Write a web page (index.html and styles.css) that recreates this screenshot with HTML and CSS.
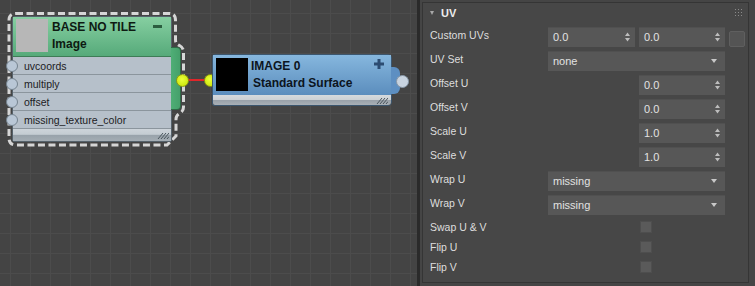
FILE: index.html
```html
<!DOCTYPE html>
<html>
<head>
<meta charset="utf-8">
<link rel="stylesheet" href="styles.css">
</head>
<body>
<div class="app">
  <div class="canvas">
    <svg class="sel" width="200" height="160" viewBox="0 0 200 160">
      <path d="M16 13.5 L169 13.5 Q175.5 13.5 175.5 20 L175.5 40 Q175.5 44 179.5 45.5 Q183.5 47.5 183.5 52 L183.5 107 Q183.5 111.5 179.5 113.5 Q176 115.5 176 119 L176 136 L167 145 L16 145 Q9 145 9 138 L9 20 Q9 13.5 16 13.5 Z" fill="none" stroke="#d6d6d6" stroke-width="3" stroke-dasharray="7 3.5"/>
    </svg>
    <div class="node n1">
      <div class="n1-tab"></div>
      <div class="n1-head">
        <div class="thumb thumb-gray"></div>
        <div class="titles">
          <div>BASE NO TILE</div>
          <div>Image</div>
        </div>
        <div class="minus"></div>
      </div>
      <div class="rows">
        <div class="row"><span class="in-sock"></span>uvcoords</div>
        <div class="row"><span class="in-sock"></span>multiply</div>
        <div class="row"><span class="in-sock"></span>offset</div>
        <div class="row"><span class="in-sock"></span>missing_texture_color</div>
      </div>
      <div class="foot">
        <svg class="grip" width="12" height="7" viewBox="0 0 12 7"><path d="M1 7 L6 1 M4 7 L9 1 M7 7 L12 1 M10 7 L12 4.6" stroke="#4a545c" stroke-width="1" fill="none"/></svg>
      </div>
    </div>
    <div class="wire"></div>
    <div class="sock-yellow s-out"></div>
    <div class="sock-yellow s-in"></div>
    <div class="node n2">
      <div class="n2-tab"></div>
      <div class="n2-sock"></div>
      <div class="n2-head">
        <div class="thumb thumb-black"></div>
        <div class="titles">
          <div>IMAGE 0</div>
          <div class="sub">Standard Surface</div>
        </div>
        <svg class="plus" width="10" height="10" viewBox="0 0 10 10"><path d="M3.5 0 H6.5 V3.5 H10 V6.5 H6.5 V10 H3.5 V6.5 H0 V3.5 H3.5 Z" fill="#2c4c72"/></svg>
      </div>
      <div class="foot2">
        <svg class="grip2" width="12" height="7" viewBox="0 0 12 7"><path d="M1 7 L6 1 M4 7 L9 1 M7 7 L12 1 M10 7 L12 4.6" stroke="#4a545c" stroke-width="1" fill="none"/></svg>
      </div>
    </div>
  </div>
  <div class="divider"></div>
  <div class="panel">
    <div class="rollout">
      <div class="r-head">
        <span class="tri"></span>
        <span class="r-title">UV</span>
        <svg class="dots" width="9" height="7" viewBox="0 0 9 7"><g fill="#8a8a8a"><rect x="0" y="0" width="1" height="1"/><rect x="3" y="0" width="1" height="1"/><rect x="6" y="0" width="1" height="1"/><rect x="0" y="3" width="1" height="1"/><rect x="3" y="3" width="1" height="1"/><rect x="6" y="3" width="1" height="1"/><rect x="0" y="6" width="1" height="1"/><rect x="3" y="6" width="1" height="1"/><rect x="6" y="6" width="1" height="1"/></g></svg>
      </div>
      <div class="grid">
        <div class="lbl">Custom UVs</div>
        <div class="field colA"><span>0.0</span><svg class="spin" width="5" height="10" viewBox="0 0 5 10"><path d="M0 4 L2.5 0.5 L5 4 Z M0 6 L2.5 9.5 L5 6 Z" fill="#bdbdbd"/></svg></div>
        <div class="field colB"><span>0.0</span><svg class="spin" width="5" height="10" viewBox="0 0 5 10"><path d="M0 4 L2.5 0.5 L5 4 Z M0 6 L2.5 9.5 L5 6 Z" fill="#bdbdbd"/></svg></div>
        <div class="swatch"></div>

        <div class="lbl">UV Set</div>
        <div class="field drop"><span>none</span><span class="arrow"></span></div>

        <div class="lbl">Offset U</div>
        <div class="field colB"><span>0.0</span><svg class="spin" width="5" height="10" viewBox="0 0 5 10"><path d="M0 4 L2.5 0.5 L5 4 Z M0 6 L2.5 9.5 L5 6 Z" fill="#bdbdbd"/></svg></div>

        <div class="lbl">Offset V</div>
        <div class="field colB"><span>0.0</span><svg class="spin" width="5" height="10" viewBox="0 0 5 10"><path d="M0 4 L2.5 0.5 L5 4 Z M0 6 L2.5 9.5 L5 6 Z" fill="#bdbdbd"/></svg></div>

        <div class="lbl">Scale U</div>
        <div class="field colB"><span>1.0</span><svg class="spin" width="5" height="10" viewBox="0 0 5 10"><path d="M0 4 L2.5 0.5 L5 4 Z M0 6 L2.5 9.5 L5 6 Z" fill="#bdbdbd"/></svg></div>

        <div class="lbl">Scale V</div>
        <div class="field colB"><span>1.0</span><svg class="spin" width="5" height="10" viewBox="0 0 5 10"><path d="M0 4 L2.5 0.5 L5 4 Z M0 6 L2.5 9.5 L5 6 Z" fill="#bdbdbd"/></svg></div>

        <div class="lbl">Wrap U</div>
        <div class="field drop"><span>missing</span><span class="arrow"></span></div>

        <div class="lbl">Wrap V</div>
        <div class="field drop"><span>missing</span><span class="arrow"></span></div>

        <div class="lbl cb-row">Swap U &amp; V</div>
        <div class="cb-cell"><span class="cb"></span></div>

        <div class="lbl cb-row">Flip U</div>
        <div class="cb-cell"><span class="cb"></span></div>

        <div class="lbl cb-row">Flip V</div>
        <div class="cb-cell"><span class="cb"></span></div>
      </div>
    </div>
  </div>
</div>
</body>
</html>
```

FILE: styles.css
```css
* { box-sizing: border-box; }
html, body { margin: 0; padding: 0; }
body {
  width: 755px;
  height: 286px;
  overflow: hidden;
  background: #3a3a3a;
  font-family: "Liberation Sans", Arial, sans-serif;
}
.app {
  display: flex;
  width: 755px;
  height: 286px;
}

/* ---------- node canvas ---------- */
.canvas {
  position: relative;
  width: 417px;
  height: 286px;
  background-color: #444444;
  background-image:
    linear-gradient(90deg, #4c4c4c 1px, transparent 1px),
    linear-gradient(#4c4c4c 1px, transparent 1px);
  background-size: 20px 20px;
  background-position: 10px 13px;
}
.divider {
  width: 3px;
  background: #2a2a2a;
}

.sel {
  position: absolute;
  left: 0;
  top: 0;
  pointer-events: none;
}
.node {
  position: absolute;
}
.n1 {
  left: 12px;
  top: 16px;
  width: 160px;
  border: 1px solid #56626b;
  border-radius: 3px 3px 2px 2px;
}
.n1-tab {
  position: absolute;
  left: 100%;
  top: 30px;
  width: 10px;
  height: 63px;
  background: linear-gradient(90deg, #4fae76, #45a06b);
  border: 1px solid #2f6a47;
  border-left: none;
  border-radius: 0 4px 4px 0;
}
.n1-head {
  display: flex;
  height: 40px;
  padding: 2px 3px 0 3px;
  background: linear-gradient(#86cfa1, #56aa7a);
  border-bottom: 1px solid #3d7c56;
  position: relative;
}
.thumb {
  width: 32px;
  height: 33px;
  flex: none;
}
.thumb-gray { background: #b7b7b7; }
.thumb-black { background: #000; }
.titles {
  margin-left: 4px;
  font-weight: bold;
  font-size: 12px;
  line-height: 17px;
  color: #0e1a12;
  white-space: nowrap;
}
.minus {
  position: absolute;
  right: 9px;
  top: 8px;
  width: 9px;
  height: 3px;
  background: #2b5e3f;
}
.rows {
  background: #b6c0ca;
}
.row {
  position: relative;
  height: 18px;
  line-height: 18px;
  padding-left: 11px;
  font-size: 10.5px;
  color: #1c2024;
  border-bottom: 1px solid #8b959d;
}
.in-sock {
  position: absolute;
  left: -7px;
  top: 3px;
  width: 12px;
  height: 12px;
  border-radius: 50%;
  background: #b9c7d6;
  border: 1px solid #75838f;
}
.foot {
  position: relative;
  height: 12px;
  background: linear-gradient(#cdd4da 0, #c4ccd2 45%, #98a2aa 50%, #a4adb4 100%);
}
.grip {
  position: absolute;
  right: 2px;
  bottom: 2px;
}

.wire {
  position: absolute;
  left: 188px;
  top: 79px;
  width: 18px;
  height: 2px;
  background: #e0262a;
}
.sock-yellow {
  position: absolute;
  width: 13px;
  height: 13px;
  border-radius: 50%;
  background: radial-gradient(circle at 45% 40%, #eaff3a, #c6e000);
  border: 1px solid #8c9a10;
}
.s-out { left: 175.5px; top: 73.5px; }
.s-in { left: 203.5px; top: 73.5px; }

.n2 {
  left: 212px;
  top: 54px;
  width: 180px;
  border: 1px solid #3c566e;
  border-radius: 3px 4px 4px 2px;
  z-index: 1;
}
.n2-tab {
  position: absolute;
  left: 100%;
  top: 12px;
  width: 9px;
  height: 27px;
  background: #5d8fc2;
  border-radius: 0 6px 6px 0;
}
.n2-sock {
  position: absolute;
  left: 183px;
  top: 20px;
  width: 13px;
  height: 13px;
  border-radius: 50%;
  background: #c8d3df;
  border: 1px solid #8898a8;
}
.n2-head {
  position: relative;
  display: flex;
  height: 40px;
  padding: 3px 3px 0 3px;
  background: linear-gradient(#86b7de, #5b8dbd);
}
.n2-head .titles { margin-left: 3px; color: #0c1420; }
.n2-head .sub { padding-left: 2px; }
.plus {
  position: absolute;
  right: 7px;
  top: 4px;
}
.foot2 {
  position: relative;
  height: 10px;
  background: linear-gradient(#d6dadd 0, #ccd1d5 45%, #9aa2aa 55%, #a9b0b6 100%);
  border-radius: 0 0 3px 2px;
}
.grip2 {
  position: absolute;
  right: 3px;
  bottom: 1px;
}

/* ---------- parameter panel ---------- */
.panel {
  flex: 1;
  background: #454545;
  padding: 2px 6px 3px 2px;
}
.rollout {
  height: 100%;
  background: #474747;
  border: 1px solid #353535;
  padding: 0 3px 0 7px;
}
.r-head {
  display: flex;
  align-items: center;
  height: 20px;
  position: relative;
}
.tri {
  width: 0;
  height: 0;
  border-left: 2.5px solid transparent;
  border-right: 2.5px solid transparent;
  border-top: 4px solid #a8a8a8;
  margin-right: 7px;
}
.r-title {
  font-weight: bold;
  font-size: 11px;
  color: #ececec;
}
.dots {
  position: absolute;
  right: 1px;
  top: 6px;
}
.grid {
  display: grid;
  grid-template-columns: 114px 87px 86px 16px;
  grid-template-rows: repeat(8, 20px) repeat(3, 16px);
  column-gap: 4px;
  row-gap: 4px;
  padding-top: 4px;
}
.lbl {
  grid-column: 1;
  font-size: 10.5px;
  line-height: 16px;
  color: #dedede;
  white-space: nowrap;
  align-self: start;
}
.lbl.cb-row { align-self: center; }
.field {
  display: flex;
  align-items: center;
  justify-content: space-between;
  background: #575757;
  box-shadow: inset 0 1px 0 #505050;
  padding: 0 5px 0 5px;
  font-size: 11px;
  color: #e2e2e2;
  height: 20px;
}
.colA { grid-column: 2; }
.colB { grid-column: 3; }
.drop { grid-column: 2 / span 2; padding-right: 8px; }
.arrow {
  width: 0;
  height: 0;
  border-left: 3px solid transparent;
  border-right: 3px solid transparent;
  border-top: 4px solid #c8c8c8;
}
.swatch {
  grid-column: 4;
  align-self: center;
  width: 16px;
  height: 16px;
  background: #545454;
  border: 1px solid #5f5f5f;
  border-radius: 2px;
  margin-top: 3px;
}
.cb-cell {
  grid-column: 3;
  display: flex;
  align-items: center;
  padding-left: 1px;
}
.cb {
  width: 12px;
  height: 12px;
  background: #5a5a5a;
  border: 1px solid #4e4e4e;
}
```
